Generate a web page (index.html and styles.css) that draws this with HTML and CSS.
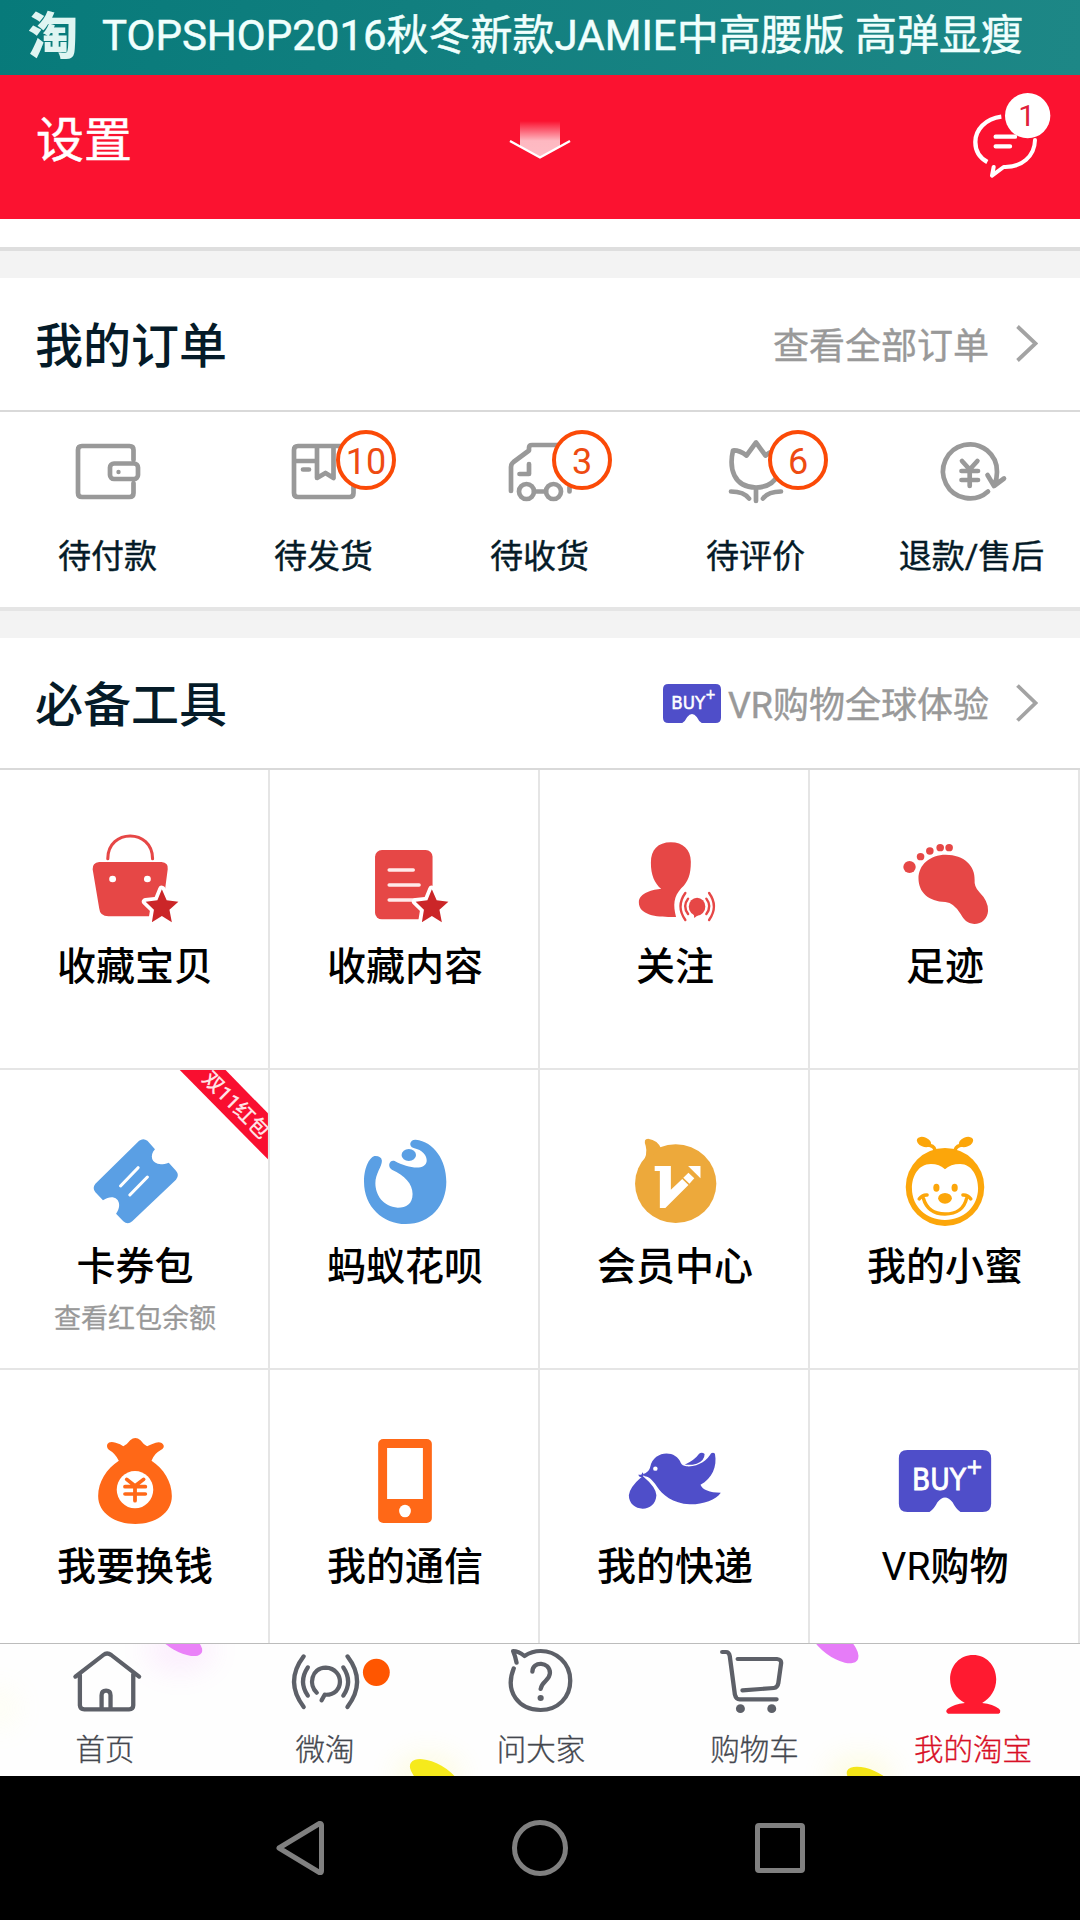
FILE: index.html
```html
<!DOCTYPE html>
<html lang="zh-CN">
<head>
<meta charset="utf-8">
<title>我的淘宝</title>
<link rel="stylesheet" href="styles.css">
</head>
<body>
<div class="screen">
  <div class="status"><span class="status-logo">淘</span><span class="status-text">TOPSHOP2016秋冬新款JAMIE中高腰版 高弹显瘦</span></div>

  <header class="header">
    <span class="header-title">设置</span>
    <svg class="header-pull" viewBox="508 118 64 44" width="64" height="44">
      <defs><linearGradient id="pull" x1="0" y1="0" x2="0" y2="1"><stop offset="0" stop-color="#fff" stop-opacity="0"/><stop offset=".55" stop-color="#fff" stop-opacity=".7"/><stop offset="1" stop-color="#fff" stop-opacity=".72"/></linearGradient></defs>
      <path d="M520 121H560V147L540 157L520 147Z" fill="url(#pull)"/>
      <path d="M510 141L540 157.500L570 141" fill="none" stroke="#fff" stroke-width="2.400"/>
    </svg>
    <svg class="header-chat" viewBox="0 0 330 330" width="110" height="110">
      <g fill="none" stroke="#fff" stroke-width="12" stroke-linecap="round" stroke-linejoin="round">
        <path d="M124 110C76 116 46 150 46 186C46 212 60 234 82 246" stroke-linecap="butt" stroke-width="13"/>
        <path d="M225 180C224 228 186 263 131 261L96 287L101 261"/>
        <path d="M107 170H165M107 199H150" stroke-width="13"/>
      </g>
      <circle cx="203" cy="107" r="68" fill="#fff"/>
      <text x="200" y="138" class="chat-count">1</text>
    </svg>
  </header>
  <div class="strip"></div>
  <div class="gap gap-first"></div>

  <section>
    <div class="section-head head-orders">
      <h2>我的订单</h2>
      <span class="more">查看全部订单</span>
      <svg class="chevron" viewBox="0 0 22 38" width="22" height="38"><path d="M1.500 1.500L19.500 18.500L1.500 35.500"/></svg>
    </div>
    <div class="orders">
      <a class="order">
        <svg class="order-icon" viewBox="0 412 216 100" width="216" height="100"><path d="M133.500 460V450Q133.500 446 129.500 446H82Q78 446 78 450V493Q78 497 82 497H129.500Q133.500 497 133.500 493V483"/><rect x="110" y="463.500" width="28" height="15.500" rx="4"/><circle class="dot" cx="118.500" cy="472" r="2.200"/></svg>
        <span>待付款</span>
      </a>
      <a class="order">
        <svg class="order-icon" viewBox="216 412 216 100" width="216" height="100"><path d="M353.500 446H298Q294 446 294 450V493Q294 497 298 497H349.500Q353.500 497 353.500 493V446M294 461H315M317 446V478L325.500 473L333.500 478V446M303 469.500H309"/></svg>
        <i class="badge">10</i>
        <span>待发货</span>
      </a>
      <a class="order">
        <svg class="order-icon" viewBox="432 412 216 100" width="216" height="100"><path d="M511 491V467Q511 464 513.500 462L529 450.500V448Q529 445 532 445H568M529 464V474H519.500"/><circle cx="526.500" cy="491.500" r="7.500"/><circle cx="553.500" cy="491.500" r="7.500"/><path d="M534 491.500H546M569.500 487V491.500"/></svg>
        <i class="badge">3</i>
        <span>待收货</span>
      </a>
      <a class="order">
        <svg class="order-icon" viewBox="648 412 216 100" width="216" height="100"><path d="M756 442.500L746.500 455.500Q739 450 733 450.500C729 468 733 487 756 487.500C779 487 783 468 779 450.500Q773 450 765.500 455.500ZM756 488V501M731 491.500Q744 491.500 749 498.500M781 491.500Q768 491.500 763 498.500"/></svg>
        <i class="badge">6</i>
        <span>待评价</span>
      </a>
      <a class="order">
        <svg class="order-icon" viewBox="864 412 216 100" width="216" height="100"><path d="M988 491.500A27 27 0 1 1 997 472Q997 479 994.500 485M987.500 475L994 486L1004 478.500M962 461L969.700 469.500L977.400 461M961.500 471H978M961.500 480H978M969.700 469.500V486"/></svg>
        <span>退款/售后</span>
      </a>
    </div>
  </section>
  <div class="gap gap-second"></div>

  <section>
    <div class="section-head head-tools">
      <h2>必备工具</h2>
      <svg class="buy-mini" viewBox="1042 270 268 186" preserveAspectRatio="none" width="58" height="39"><use href="#buy"/></svg>
      <span class="more">VR购物全球体验</span>
      <svg class="chevron" viewBox="0 0 22 38" width="22" height="38"><path d="M1.500 1.500L19.500 19L1.500 36.500"/></svg>
    </div>
    <div class="tools">
      <a class="tool">
        <svg class="tool-icon" viewBox="0 -90 784 480" preserveAspectRatio="none">
          <path d="M313 176C313 85 443 85 443 176" fill="none" stroke="#e64746" stroke-width="9" stroke-linecap="round"/>
          <path d="M288 186H469Q490 188 487 208L469 349H315Q290 349 288 325L269 208Q268 188 288 186Z" fill="#e64746"/>
          <circle cx="327" cy="237" r="10" fill="#fff"/><circle cx="428" cy="237" r="10" fill="#fff"/>
          <g id="star"><path d="M470 268L484 301L518 305L492 329L499 367L470 348L441 367L447 329L423 305L457 301Z" fill="#fff" stroke="#fff" stroke-width="22" stroke-linejoin="round"/><path d="M470 268L484 301L518 305L492 329L499 367L470 348L441 367L447 329L423 305L457 301Z" fill="#cb2628"/></g>
        </svg>
        <span class="tool-name">收藏宝贝</span>
      </a>
      <a class="tool">
        <svg class="tool-icon" viewBox="784 -90 784 480" preserveAspectRatio="none">
          <rect x="1089" y="150" width="167" height="208" rx="20" fill="#e64746"/>
          <path d="M1130 210H1200M1130 255H1217M1130 300H1210" stroke="#ffeaea" stroke-width="10" stroke-linecap="round"/>
          <use href="#star" x="784"/>
        </svg>
        <span class="tool-name">收藏内容</span>
      </a>
      <a class="tool">
        <svg class="tool-icon" viewBox="0 -90 784 480" preserveAspectRatio="none">
          <path d="M380 127C415 127 438 149 438 185C438 225 430 245 410 265C388 290 386 315 395 351C350 352 287 350 287 307C287 278 330 268 352 267C332 248 322 225 322 188C322 150 342 127 380 127Z" fill="#e64746"/>
          <ellipse cx="456" cy="320" rx="24" ry="27" fill="#e64746"/><path d="M446 340H466L448 354Z" fill="#e64746"/>
          <path d="M422 279Q394 319 422 360M491 279Q519 319 491 360M430 296Q413 319 430 342M483 296Q500 319 483 342" fill="none" stroke="#e64746" stroke-width="7" stroke-linecap="round"/>
        </svg>
        <span class="tool-name">关注</span>
      </a>
      <a class="tool">
        <svg class="tool-icon" viewBox="784 -90 784 480" preserveAspectRatio="none">
          <g fill="#e64746"><path d="M1178 164C1232 164 1264 198 1262 240Q1260 260 1276 277Q1302 304 1301 332C1300 355 1283 372 1261 372C1240 371 1231 359 1222 343Q1202 308 1177 306C1128 305 1099 277 1099 235C1099 194 1133 164 1178 164Z"/>
          <circle cx="1073" cy="201" r="18"/><circle cx="1105" cy="170" r="11"/><circle cx="1132" cy="153" r="11"/><circle cx="1162" cy="143" r="11"/><circle cx="1188" cy="143" r="11"/></g>
        </svg>
        <span class="tool-name">足迹</span>
      </a>

      <a class="tool">
        <svg class="tool-icon" viewBox="0 30 784 480" preserveAspectRatio="none">
          <path d="M404 242Q416 233 428 242L450 268C430 290 443 325 490 308L511 332Q522 345 511 359L384 484Q371 496 358 484L337 461C360 430 337 395 299 421L277 397Q267 384 277 371Z" fill="#5a9fe4"/>
          <path d="M350 378L401 323M377 405L428 351" stroke="#fff" stroke-width="9" stroke-linecap="round"/>
          <path d="M522 30H655L778 160V298Z" fill="#f90f30"/>
        </svg>
        <span class="ribbon">双11红包</span>
        <span class="tool-name">卡券包</span>
        <span class="tool-note">查看红包余额</span>
      </a>
      <a class="tool">
        <svg class="tool-icon" viewBox="784 30 784 480" preserveAspectRatio="none">
          <path d="M1090 288C1075 288 1057 320 1057 365C1057 440 1112 492 1178 492C1250 492 1296 435 1296 365C1296 300 1260 245 1207 239C1190 238 1185 258 1201 264C1227 270 1240 287 1239 303C1236 333 1185 325 1146 303C1130 298 1124 321 1138 329C1175 347 1198 370 1198 402C1198 432 1180 443 1155 443C1112 440 1090 405 1090 370C1090 340 1109 320 1109 302Q1107 288 1090 288Z" fill="#5a9fe4"/>
          <ellipse cx="1187" cy="285" rx="21" ry="18" fill="#5a9fe4"/>
        </svg>
        <span class="tool-name">蚂蚁花呗</span>
      </a>
      <a class="tool">
        <svg class="tool-icon" viewBox="0 30 784 480" preserveAspectRatio="none">
          <g fill="#eda93b"><ellipse cx="394" cy="371" rx="118" ry="118"/><path d="M296 310Q314 285 307 258Q299 236 314 236Q342 240 352 266Z"/></g>
          <path d="M333 318H380V389L413 357L431 375L364 444H348V333H333ZM416 353L431 338L448 355L434 371ZM430 318H466V355Z" fill="#fff"/>
        </svg>
        <span class="tool-name">会员中心</span>
      </a>
      <a class="tool">
        <svg class="tool-icon" viewBox="784 30 784 480" preserveAspectRatio="none">
          <ellipse cx="1176" cy="381" rx="114" ry="117" fill="#fca60a"/>
          <path d="M1176 328Q1192 312 1220 312C1254 312 1272 350 1272 385C1272 440 1230 480 1176 480C1122 480 1080 440 1080 385C1080 350 1098 312 1135 312Q1160 312 1176 328Z" fill="#fff"/>
          <g fill="#fca60a"><ellipse cx="1151" cy="383" rx="9" ry="12"/><ellipse cx="1204" cy="383" rx="9" ry="12"/><ellipse cx="1176" cy="415" rx="20" ry="16"/><ellipse cx="1115" cy="246" rx="22" ry="14" transform="rotate(24 1115 246)"/><ellipse cx="1237" cy="246" rx="22" ry="14" transform="rotate(-24 1237 246)"/></g>
          <path d="M1120 255Q1143 254 1147 270M1232 255Q1210 254 1205 270M1101 417Q1110 404 1124 405M1228 405Q1242 404 1251 417M1113 414Q1126 462 1176 462Q1228 462 1239 414" fill="none" stroke="#fca60a" stroke-width="10" stroke-linecap="round"/>
        </svg>
        <span class="tool-name">我的小蜜</span>
      </a>

      <a class="tool">
        <svg class="tool-icon" viewBox="0 30 784 480" preserveAspectRatio="none">
          <path d="M345 302Q335 280 316 269Q308 262 312 252Q317 243 336 248Q350 251 358 259Q368 255 378 241Q393 227 408 241Q417 254 427 259Q438 253 452 248Q470 244 475 256Q478 264 467 270Q448 280 440 302C475 325 499 365 499 408C499 460 450 492 393 492C335 492 285 460 285 408C285 365 310 325 345 302Z" fill="#ff6817"/>
          <ellipse cx="392" cy="389" rx="53" ry="56" fill="#fff"/>
          <path d="M368 358L392 378L417 358M363 380H422M363 402H422M392 378V422" fill="none" stroke="#ff6817" stroke-width="11" stroke-linecap="round"/>
        </svg>
        <span class="tool-name">我要换钱</span>
      </a>
      <a class="tool">
        <svg class="tool-icon" viewBox="784 30 784 480" preserveAspectRatio="none">
          <rect x="1098" y="237" width="156" height="252" rx="15" fill="#ff6817"/><rect x="1124" y="264" width="104" height="153" fill="#fff"/><ellipse cx="1176" cy="453" rx="17" ry="19" fill="#fff"/>
        </svg>
        <span class="tool-name">我的通信</span>
      </a>
      <a class="tool">
        <svg class="tool-icon" viewBox="0 30 784 480" preserveAspectRatio="none">
          <g fill="#4f4ec9"><path d="M299 343Q317 337 320 321C330 270 395 268 409 309Q413 317 425 319C460 322 486 300 497 280Q503 276 508 281C515 320 500 355 466 374Q475 397 525 398C512 420 470 434 435 433C385 430 355 404 340 380C325 358 316 350 304 349Z"/>
          <path d="M420 314Q449 300 462 281Q470 275 478 282Q478 302 455 311Q438 316 420 314Z"/>
          <path d="M299 349Q337 382 338 406C336 433 319 446 298 446C277 446 258 431 258 406Q260 382 297 349ZM285 344L294 344L298 337L302 345L297 352L289 350Z"/></g>
          <circle cx="335" cy="326" r="6.500" fill="#fff"/>
        </svg>
        <span class="tool-name">我的快递</span>
      </a>
      <a class="tool">
        <svg class="tool-icon" viewBox="784 30 784 480" preserveAspectRatio="none">
          <g id="buy"><path d="M1067 270H1285Q1310 270 1310 295V431Q1310 456 1285 456H1221Q1208 448 1198 427Q1176 398 1154 427Q1144 448 1131 456H1067Q1042 456 1042 431V295Q1042 270 1067 270Z" fill="#4f4ec9"/>
          <text class="buy-text" x="1080" y="390" textLength="206" lengthAdjust="spacingAndGlyphs">BUY<tspan class="buy-plus" dy="-48">+</tspan></text></g>
        </svg>
        <span class="tool-name"><span class="latin">VR</span>购物</span>
      </a>
    </div>
  </section>

  <nav class="tabs">
    <svg class="petals" viewBox="0 1644 1080 132" width="1080" height="132">
      <defs><filter id="glow" x="-100%" y="-100%" width="300%" height="300%"><feGaussianBlur stdDeviation="14"/></filter></defs>
      <g filter="url(#glow)" opacity=".12"><ellipse cx="180" cy="1650" rx="34" ry="22" fill="#e97cf6"/><ellipse cx="428" cy="1776" rx="34" ry="22" fill="#f6ea1c"/><ellipse cx="860" cy="1776" rx="34" ry="20" fill="#f6ea1c"/><ellipse cx="0" cy="1708" rx="18" ry="20" fill="#fbf7a0"/></g>
      <ellipse cx="179" cy="1640" rx="26" ry="11" transform="rotate(30 179 1640)" fill="#ea82f8"/>
      <ellipse cx="834" cy="1643" rx="29" ry="13" transform="rotate(37 834 1643)" fill="#e67cf8"/>
      <ellipse cx="435" cy="1777" rx="28" ry="13" transform="rotate(30 435 1777)" fill="#f6ea1c"/>
      <ellipse cx="870" cy="1781" rx="25" ry="11" transform="rotate(24 870 1781)" fill="#f3e518"/>
    </svg>
    <a class="tab tab-home">
      <svg class="tab-icon" viewBox="0 42 627.300 228" preserveAspectRatio="none"><path d="M219 140L300 75Q311 66 323 75L404 140M232 134V226Q233 238 245 238H375Q387 238 387 226V132M295 235V196Q295 182 308 182Q321 182 321 196V235"/></svg>
      <span>首页</span>
    </a>
    <a class="tab">
      <svg class="tab-icon" viewBox="627.300 42 627.300 228" preserveAspectRatio="none"><path d="M882 79Q826 155 882 231M1009 79Q1065 155 1009 231M894 112Q866 155 894 197M997 112Q1025 155 997 197M920 188C896 166 903 114 946 113C1002 116 1001 198 943 194L934 211"/><ellipse class="new" cx="1093" cy="127" rx="39" ry="41"/></svg>
      <span>微淘</span>
    </a>
    <a class="tab">
      <svg class="tab-icon" viewBox="1254.500 42 627.300 228" preserveAspectRatio="none"><path d="M1492 115C1464 187 1508 240 1570 240C1620 240 1656 202 1656 152C1656 98 1614 63 1570 63Q1545 63 1523 78Q1505 63 1490 63Q1497 80 1500 98M1546 125C1546 92 1597 94 1597 129C1596 153 1574 152 1570 177"/><circle class="fill" cx="1570" cy="204" r="9"/></svg>
      <span>问大家</span>
    </a>
    <a class="tab tab-cart">
      <svg class="tab-icon" viewBox="313.600 42 627.300 228" preserveAspectRatio="none"><path d="M529 66H540Q549 66 551 78L566 194Q569 208 580 208H687M574 87H688Q702 88 700 101L692 160Q690 173 679 174L588 181"/><circle class="fill" cx="582" cy="236" r="13"/><circle class="fill" cx="673" cy="236" r="13"/></svg>
      <span>购物车</span>
    </a>
    <a class="tab tab-active">
      <svg class="tab-icon" viewBox="941 42 627.300 228" preserveAspectRatio="none"><path class="person" d="M1258 75C1295 75 1325 106 1325 148C1325 179 1308 206 1284 219Q1316 223 1333 236Q1339 241 1336 248L1332 251H1185L1180 246Q1179 240 1184 236Q1202 223 1234 219C1208 206 1191 179 1191 148C1191 106 1220 75 1258 75Z"/></svg>
      <span>我的淘宝</span>
    </a>
  </nav>

  <div class="navbar">
    <svg viewBox="276 1818 530 60" width="530" height="60"><g fill="none" stroke="#808080" stroke-width="5" stroke-linejoin="round"><path d="M279 1848L319.500 1823.500Q321.500 1823 321.500 1825V1871Q321.500 1873 319.500 1872.500Z"/><circle cx="540" cy="1848" r="25.500"/><rect x="757.500" y="1825.500" width="45" height="45" rx="1.500"/></g></svg>
  </div>
</div>
</body>
</html>
```
FILE: styles.css
```css
* { box-sizing: border-box; }
body {
  margin: 0;
  background: #fff;
  font-family: Roboto, "Noto Sans CJK SC", sans-serif;
}
svg { display: block; flex: none; }
.screen {
  width: 1080px;
  height: 1920px;
  overflow: hidden;
  display: flex;
  flex-direction: column;
}
.screen > * { flex: none; }

.status {
  height: 75px;
  display: flex;
  align-items: center;
  background: linear-gradient(100deg, #077a7a, #138080 45%, #1d8786);
  color: #f0fffd;
  line-height: 70px;
  padding: 0 0 3px 28px;
  white-space: nowrap;
}
.status-logo {
  width: 74px;
  font-size: 50px;
  font-weight: 900;
  color: #dff5f2;
  padding-top: 2px;
}
.status-text { font-size: 42px; -webkit-text-stroke: .5px currentColor; }

.header {
  height: 144px;
  background: #fb1230;
  color: #fff;
  display: flex;
  padding: 0 10px 0 36px;
}
.header-title {
  font-size: 48px;
  line-height: 132px;
  width: 472px;
  -webkit-text-stroke: .5px currentColor;
}
.header-pull { margin-top: 43px; }
.header-chat { margin: 5px 0 0 auto; }
.chat-count { font-size: 90px; fill: #e0203a; text-anchor: middle; }

.strip { height: 28px; background: #fff; }
.gap { background: #f3f3f3; border-top: 4px solid #e5e5e5; }
.gap-first { height: 31px; border-top-color: #dedede; }
.gap-second { height: 31px; }

.section-head {
  display: flex;
  align-items: center;
  border-bottom: 2px solid #d9d9d9;
  padding: 0 42px 0 35px;
}
.head-orders { height: 134px; }
.head-tools { height: 132px; }
h2 {
  margin: 0 auto 0 0;
  padding-top: 6px;
  font-size: 48px;
  font-weight: 500;
  line-height: 70px;
  color: #051b28;
}
.more {
  font-size: 36px;
  color: #999;
  line-height: 60px;
  padding-top: 6px;
  -webkit-text-stroke: .4px currentColor;
}
.buy-mini { margin-right: 7px; }
.chevron { margin-left: 27px; fill: none; stroke: #a3a3a3; stroke-width: 3.8; }

.orders { display: grid; grid-template-columns: repeat(5, 216px); height: 195px; }
.order {
  position: relative;
  display: flex;
  flex-direction: column;
  align-items: center;
  font-size: 33px;
  color: #051b28;
}
.order span {
  line-height: 50px;
  margin: 20px 1px 0 0;
  white-space: nowrap;
  -webkit-text-stroke: .4px currentColor;
}
.order-icon {
  fill: none;
  stroke: #999;
  stroke-width: 4.7;
  stroke-linecap: round;
  stroke-linejoin: round;
}
.dot { fill: #999; stroke: none; }
.badge {
  position: absolute;
  left: 120px;
  top: 18px;
  width: 60px;
  height: 60px;
  border: 4.500px solid #fb4a07;
  border-radius: 50%;
  background: #fff;
  color: #ee4b12;
  font-size: 36px;
  font-style: normal;
  line-height: 57px;
  text-align: center;
}

.tools {
  display: grid;
  grid-template-columns: repeat(4, 270px);
  grid-template-rows: 300px 300px 273px;
  overflow: hidden;
}
.tool {
  position: relative;
  overflow: hidden;
  display: flex;
  flex-direction: column;
  align-items: center;
  border: solid #e5e5e5;
  border-width: 0 2px 2px 0;
}
.tool:nth-child(n+9) { border-bottom: 0; }
.tool-icon { width: 270px; height: 160px; margin-right: -2px; }
.tool-name {
  font-size: 39px;
  font-weight: 500;
  line-height: 70px;
  margin: 2px 0 0 2px;
  color: #000;
  white-space: nowrap;
}
.latin { font-weight: 400; }
.tool-note {
  font-size: 27px;
  line-height: 40px;
  margin: -3px 0 0 2px;
  color: #999;
  -webkit-text-stroke: .3px currentColor;
}
.ribbon {
  position: absolute;
  left: 186px;
  top: 21px;
  width: 100px;
  text-align: center;
  font-size: 20.500px;
  font-weight: 500;
  line-height: 28px;
  color: #ffe3e6;
  transform: rotate(45deg);
}
.buy-text {
  font-family: "DejaVu Sans", sans-serif;
  font-size: 88px;
  fill: #fff;
  stroke: #fff;
  stroke-width: 2.5;
}
.buy-plus { font-size: 66px; }

.tabs {
  position: relative;
  height: 133px;
  border-top: 1px solid #bcbcbc;
  display: grid;
  grid-template-columns: repeat(5, 216px);
  background: #fefefe;
}
.petals { position: absolute; inset: 0; }
.tab {
  position: relative;
  display: flex;
  flex-direction: column;
  align-items: center;
  font-size: 29.500px;
  font-weight: 300;
  color: #44474e;
}
.tab span {
  line-height: 44px;
  margin: 8px 0 0 2px;
  -webkit-text-stroke: .3px currentColor;
}
.tab-home span { margin: 8px 6px 0 0; }
.tab-cart span { margin: 8px 3px 0 0; }
.tab-icon {
  width: 216px;
  height: 76px;
  fill: none;
  stroke: #5d6068;
  stroke-width: 12.5;
  stroke-linecap: round;
  stroke-linejoin: round;
}
.fill { fill: #5d6068; stroke: none; }
.new { fill: #ff5600; stroke: none; }
.person { fill: #ff1a30; stroke: none; }
.tab-active { color: #d80f26; }

.navbar {
  height: 144px;
  background: #000;
  display: flex;
  align-items: center;
  padding-left: 276px;
}
```
